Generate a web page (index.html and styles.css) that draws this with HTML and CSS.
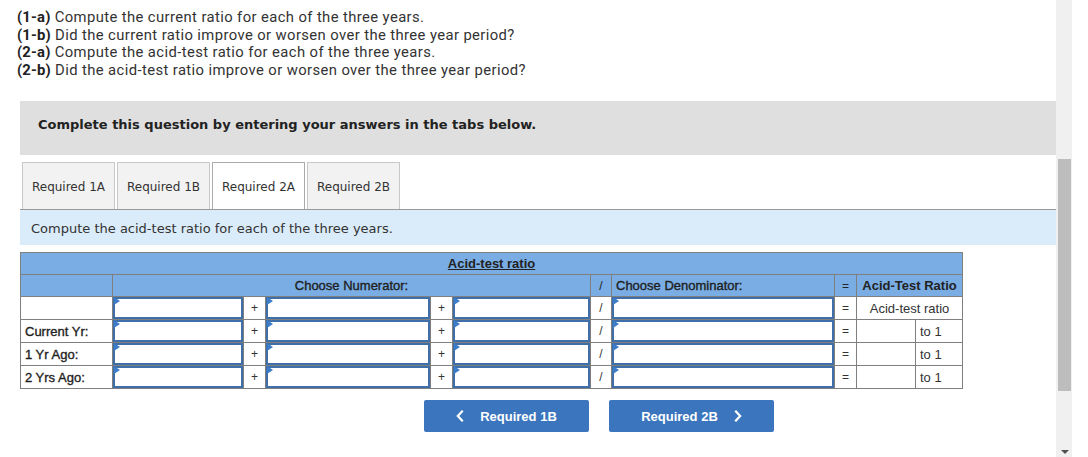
FILE: index.html
```html
<!DOCTYPE html>
<html>
<head>
<meta charset="utf-8">
<link rel="stylesheet" href="styles.css">
</head>
<body>
<div class="frame">
  <div class="page">
    <div class="prompt">
      <p><b>(1-a)</b> Compute the current ratio for each of the three years.</p>
      <p><b>(1-b)</b> Did the current ratio improve or worsen over the three year period?</p>
      <p><b>(2-a)</b> Compute the acid-test ratio for each of the three years.</p>
      <p><b>(2-b)</b> Did the acid-test ratio improve or worsen over the three year period?</p>
    </div>
    <div class="instruct">Complete this question by entering your answers in the tabs below.</div>
    <div class="tabs">
      <div class="tab">Required 1A</div>
      <div class="tab">Required 1B</div>
      <div class="tab active">Required 2A</div>
      <div class="tab">Required 2B</div>
    </div>
    <div class="infobar">Compute the acid-test ratio for each of the three years.</div>
    <table class="grid">
      <colgroup>
        <col class="c-label"><col class="c-in1"><col class="c-op"><col class="c-in2"><col class="c-op"><col class="c-in3"><col class="c-op2"><col class="c-den"><col class="c-op"><col class="c-res"><col class="c-to">
      </colgroup>
      <tr class="hd">
        <td colspan="11" class="title"><u>Acid-test ratio</u></td>
      </tr>
      <tr class="hd">
        <td></td>
        <td colspan="5" class="center medium">Choose Numerator:</td>
        <td class="op">/</td>
        <td class="left medium">Choose Denominator:</td>
        <td class="op">=</td>
        <td colspan="2" class="center strong">Acid-Test Ratio</td>
      </tr>
      <tr>
        <td></td>
        <td class="in"><div class="box"></div></td>
        <td class="op">+</td>
        <td class="in"><div class="box"></div></td>
        <td class="op">+</td>
        <td class="in"><div class="box"></div></td>
        <td class="op">/</td>
        <td class="in"><div class="box"></div></td>
        <td class="op">=</td>
        <td colspan="2" class="center">Acid-test ratio</td>
      </tr>
      <tr>
        <td class="label">Current Yr:</td>
        <td class="in"><div class="box"></div></td>
        <td class="op">+</td>
        <td class="in"><div class="box"></div></td>
        <td class="op">+</td>
        <td class="in"><div class="box"></div></td>
        <td class="op">/</td>
        <td class="in"><div class="box"></div></td>
        <td class="op">=</td>
        <td></td>
        <td class="left">to 1</td>
      </tr>
      <tr>
        <td class="label">1 Yr Ago:</td>
        <td class="in"><div class="box"></div></td>
        <td class="op">+</td>
        <td class="in"><div class="box"></div></td>
        <td class="op">+</td>
        <td class="in"><div class="box"></div></td>
        <td class="op">/</td>
        <td class="in"><div class="box"></div></td>
        <td class="op">=</td>
        <td></td>
        <td class="left">to 1</td>
      </tr>
      <tr>
        <td class="label">2 Yrs Ago:</td>
        <td class="in"><div class="box"></div></td>
        <td class="op">+</td>
        <td class="in"><div class="box"></div></td>
        <td class="op">+</td>
        <td class="in"><div class="box"></div></td>
        <td class="op">/</td>
        <td class="in"><div class="box"></div></td>
        <td class="op">=</td>
        <td></td>
        <td class="left">to 1</td>
      </tr>
    </table>
    <div class="nav">
      <div class="btn">
        <svg class="chev" width="8" height="12" viewBox="0 0 8 12"><path d="M6 1.5 L1.8 6 L6 10.5" fill="none" stroke="#fff" stroke-width="2.2" stroke-linecap="square"/></svg>
        <span>Required 1B</span>
      </div>
      <div class="btn">
        <span>Required 2B</span>
        <svg class="chev" width="8" height="12" viewBox="0 0 8 12"><path d="M2 1.5 L6.2 6 L2 10.5" fill="none" stroke="#fff" stroke-width="2.2" stroke-linecap="square"/></svg>
      </div>
    </div>
  </div>
  <div class="scrollbar">
    <div class="thumb"></div>
    <div class="arrow"></div>
  </div>
  <div class="gutter"></div>
</div>
</body>
</html>
```

FILE: styles.css
```css
html, body {
  margin: 0;
  padding: 0;
  background: #fff;
}
.frame {
  display: flex;
  height: 457px;
  overflow: hidden;
}
.page {
  width: 1036px;
  padding-left: 20px;
  flex: none;
}
.prompt {
  padding: 9px 0 0 0;
  margin-left: -3px;
  font-family: Roboto, "Liberation Sans", sans-serif;
  font-size: 14.8px;
  line-height: 17.5px;
  letter-spacing: 0.4px;
  color: #333;
}
.prompt p {
  margin: 0;
}
.prompt b {
  font-weight: 700;
  letter-spacing: 0.2px;
  color: #222;
}
.instruct {
  margin-top: 22px;
  height: 54px;
  box-sizing: border-box;
  background: #dfdfdf;
  padding-left: 18px;
  padding-bottom: 8px;
  display: flex;
  align-items: center;
  font-family: "DejaVu Sans", Verdana, sans-serif;
  font-weight: bold;
  font-size: 13px;
  color: #222;
}
.tabs {
  display: flex;
  gap: 2px;
  margin-top: 7px;
  margin-left: 2px;
}
.tab {
  width: 93px;
  height: 47px;
  box-sizing: border-box;
  border: 1px solid #c8c8c8;
  border-bottom: none;
  background: #f2f2f2;
  display: flex;
  align-items: center;
  justify-content: center;
  padding-top: 1px;
  font-family: "DejaVu Sans", Verdana, sans-serif;
  font-size: 12px;
  color: #333;
}
.tab.active {
  background: #fff;
  border-color: #aaa;
}
.infobar {
  height: 36px;
  box-sizing: border-box;
  border-top: 1px solid #999;
  background: #daebf9;
  padding-left: 11px;
  padding-top: 1px;
  display: flex;
  align-items: center;
  font-family: "DejaVu Sans", Verdana, sans-serif;
  font-size: 13px;
  color: #333;
}
.grid {
  margin-top: 7px;
  border-collapse: collapse;
  table-layout: fixed;
  width: 943px;
  font-family: "Liberation Sans", Arial, sans-serif;
  font-size: 13px;
  color: #333;
}
.c-label { width: 92px; }
.c-in1 { width: 131px; }
.c-op { width: 22px; }
.c-in2 { width: 165px; }
.c-in3 { width: 138px; }
.c-op2 { width: 21px; }
.c-den { width: 223px; }
.c-res { width: 59px; }
.c-to { width: 47px; }
.grid td {
  border: 1px solid #7f7f7f;
  height: 22px;
  padding: 0;
  box-sizing: border-box;
  white-space: nowrap;
}
.grid tr.hd td {
  background: #79ade4;
  color: #222;
}
.grid td.title {
  text-align: center;
  font-weight: bold;
}
.grid td.title u {
  text-decoration-thickness: 1px;
}
.center { text-align: center; }
.left { text-align: left; padding-left: 4px !important; }
.strong { font-weight: bold; }
.medium {
  color: #1e1e1e;
  -webkit-text-stroke: 0.35px #1e1e1e;
}
.op {
  text-align: center;
  font-size: 12px;
}
.label {
  padding-left: 4px !important;
  color: #1e1e1e;
  -webkit-text-stroke: 0.35px #1e1e1e;
}
.grid td.in {
  padding: 0;
}
.box {
  position: relative;
  height: 22px;
  box-sizing: border-box;
  border: 2px solid #3f6fa9;
  background: #fff;
}
.box::before {
  content: "";
  position: absolute;
  left: -1px;
  top: -2px;
  width: 0;
  height: 0;
  border-top: 4px solid transparent;
  border-bottom: 4px solid transparent;
  border-left: 6px solid #3d7cc9;
}
.nav {
  display: flex;
  gap: 20px;
  margin-top: 11px;
  padding-left: 404px;
}
.btn {
  width: 165px;
  height: 32px;
  box-sizing: border-box;
  background: #3a75bd;
  border-radius: 2px;
  color: #fff;
  display: flex;
  align-items: center;
  justify-content: center;
  gap: 16px;
  font-family: "Liberation Sans", Arial, sans-serif;
  font-weight: bold;
  font-size: 13px;
}
.chev {
  display: block;
}
.scrollbar {
  width: 16px;
  flex: none;
  background: #f0f0f0;
  display: flex;
  flex-direction: column;
  align-items: center;
}
.thumb {
  margin-top: 159px;
  width: 13px;
  height: 232px;
  margin-left: 1px;
  background: #bdbdbd;
}
.arrow {
  margin-top: auto;
  margin-bottom: 3px;
  margin-left: 1px;
  width: 0;
  height: 0;
  border-left: 4px solid transparent;
  border-right: 4px solid transparent;
  border-top: 4px solid #505050;
}
.gutter {
  flex: 1;
  background: #fff;
}
```
